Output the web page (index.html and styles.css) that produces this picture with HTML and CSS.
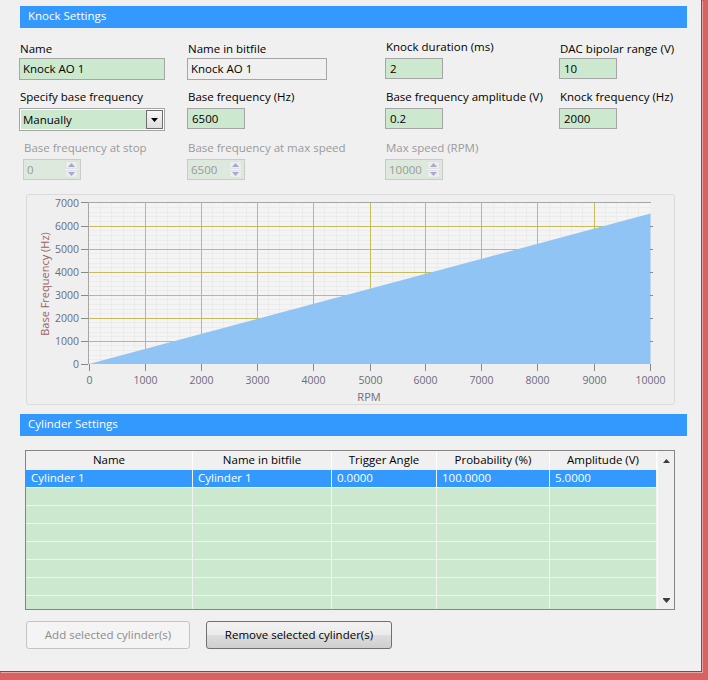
FILE: index.html
```html
<!DOCTYPE html>
<html>
<head>
<meta charset="utf-8">
<link rel="stylesheet" href="styles.css">
</head>
<body>
<div class="window">
  <div class="section-header">Knock Settings</div>

  <div class="form">
    <div class="field">
      <div class="label">Name</div>
      <div class="input w-name r1">Knock AO 1</div>
    </div>
    <div class="field">
      <div class="label">Name in bitfile</div>
      <div class="input w-bit r1 indicator">Knock AO 1</div>
    </div>
    <div class="field">
      <div class="label up">Knock duration (ms)</div>
      <div class="input w-sm r1u h21">2</div>
    </div>
    <div class="field">
      <div class="label">DAC bipolar range (V)</div>
      <div class="input w-sm r1 h21">10</div>
    </div>

    <div class="field">
      <div class="label">Specify base frequency</div>
      <div class="combo">
        <div class="combo-text">Manually</div>
        <div class="combo-btn"><svg width="7" height="4" viewBox="0 0 7 4"><path d="M0 0h7L3.5 4z" fill="#000"/></svg></div>
      </div>
    </div>
    <div class="field">
      <div class="label">Base frequency (Hz)</div>
      <div class="input w-sm r2 h21">6500</div>
    </div>
    <div class="field">
      <div class="label">Base frequency amplitude (V)</div>
      <div class="input w-sm r2 h21">0.2</div>
    </div>
    <div class="field">
      <div class="label">Knock frequency (Hz)</div>
      <div class="input w-sm r2 h21">2000</div>
    </div>

    <div class="field shift">
      <div class="label disabled">Base frequency at stop</div>
      <div class="spin">
        <div class="spin-val">0</div>
        <div class="spin-btns">
          <div class="spin-btn"><svg width="7" height="4" viewBox="0 0 7 4"><path d="M0 4h7L3.5 0z" fill="#a4a8d2"/></svg></div>
          <div class="spin-btn"><svg width="7" height="4" viewBox="0 0 7 4"><path d="M0 0h7L3.5 4z" fill="#a4a8d2"/></svg></div>
        </div>
      </div>
    </div>
    <div class="field">
      <div class="label disabled">Base frequency at max speed</div>
      <div class="spin">
        <div class="spin-val">6500</div>
        <div class="spin-btns">
          <div class="spin-btn"><svg width="7" height="4" viewBox="0 0 7 4"><path d="M0 4h7L3.5 0z" fill="#a4a8d2"/></svg></div>
          <div class="spin-btn"><svg width="7" height="4" viewBox="0 0 7 4"><path d="M0 0h7L3.5 4z" fill="#a4a8d2"/></svg></div>
        </div>
      </div>
    </div>
    <div class="field">
      <div class="label disabled">Max speed (RPM)</div>
      <div class="spin">
        <div class="spin-val">10000</div>
        <div class="spin-btns">
          <div class="spin-btn"><svg width="7" height="4" viewBox="0 0 7 4"><path d="M0 4h7L3.5 0z" fill="#a4a8d2"/></svg></div>
          <div class="spin-btn"><svg width="7" height="4" viewBox="0 0 7 4"><path d="M0 0h7L3.5 4z" fill="#a4a8d2"/></svg></div>
        </div>
      </div>
    </div>
  </div>

  <div class="chart">
    <svg class="chart-svg" width="647" height="209" viewBox="0 0 647 209">
      <rect x="62" y="7" width="561" height="162" fill="#f4f4f4"/>
      <g stroke="#ececec" stroke-width="1">
        <path d="M73.5 7V169M84.5 7V169M96.5 7V169M107.5 7V169M129.5 7V169M140.5 7V169M152.5 7V169M163.5 7V169M185.5 7V169M196.5 7V169M208.5 7V169M219.5 7V169M241.5 7V169M252.5 7V169M264.5 7V169M275.5 7V169M297.5 7V169M309.5 7V169M320.5 7V169M331.5 7V169M354.5 7V169M365.5 7V169M376.5 7V169M387.5 7V169M410.5 7V169M421.5 7V169M432.5 7V169M443.5 7V169M466.5 7V169M477.5 7V169M488.5 7V169M499.5 7V169M522.5 7V169M533.5 7V169M544.5 7V169M555.5 7V169M578.5 7V169M589.5 7V169M600.5 7V169M611.5 7V169"/>
        <path d="M62 12.5H623M62 17.5H623M62 21.5H623M62 26.5H623M62 35.5H623M62 40.5H623M62 45.5H623M62 49.5H623M62 58.5H623M62 63.5H623M62 68.5H623M62 72.5H623M62 81.5H623M62 86.5H623M62 91.5H623M62 95.5H623M62 104.5H623M62 109.5H623M62 114.5H623M62 118.5H623M62 127.5H623M62 132.5H623M62 137.5H623M62 141.5H623M62 150.5H623M62 155.5H623M62 160.5H623M62 164.5H623"/>
      </g>
      <g stroke="#c4bb5e" stroke-width="1">
        <path d="M118.5 7V169M174.5 7V169M230.5 7V169M286.5 7V169M343.5 7V169M398.5 7V169M454.5 7V169M510.5 7V169M567.5 7V169"/>
        <path d="M62 146.5H623M62 123.5H623M62 100.5H623M62 77.5H623M62 54.5H623M62 31.5H623"/>
      </g>
      <polygon points="62,169 623.5,169 623.5,18.6" fill="#90c4f5"/>
      <g stroke="#a6a6a6" stroke-width="1">
        <path d="M62 7.5H624"/>
        <path d="M61.5 7V169"/>
      </g>
      <g stroke="#8a8a8a" stroke-width="1">
        <path d="M54 7.5H61M54 31.5H61M54 54.5H61M54 77.5H61M54 100.5H61M54 123.5H61M54 146.5H61M54 169.5H61"/>
        <path d="M623 31.5H626M623 54.5H626M623 77.5H626M623 100.5H626M623 123.5H626M623 146.5H626"/>
        <path d="M62.5 169V176M118.5 169V176M174.5 169V176M230.5 169V176M286.5 169V176M343.5 169V176M398.5 169V176M454.5 169V176M510.5 169V176M567.5 169V176M623.5 169V176"/>
      </g>
      <g class="tick-text" text-anchor="end">
        <text x="52" y="11.5">7000</text>
        <text x="52" y="35">6000</text>
        <text x="52" y="58">5000</text>
        <text x="52" y="81">4000</text>
        <text x="52" y="104">3000</text>
        <text x="52" y="127">2000</text>
        <text x="52" y="150">1000</text>
        <text x="52" y="173">0</text>
      </g>
      <g class="tick-text" text-anchor="middle">
        <text x="62.5" y="189">0</text>
        <text x="118.5" y="189">1000</text>
        <text x="174.5" y="189">2000</text>
        <text x="230.5" y="189">3000</text>
        <text x="286.5" y="189">4000</text>
        <text x="343.5" y="189">5000</text>
        <text x="398.5" y="189">6000</text>
        <text x="454.5" y="189">7000</text>
        <text x="510.5" y="189">8000</text>
        <text x="567.5" y="189">9000</text>
        <text x="623.5" y="189">10000</text>
      </g>
      <text class="axis-x" x="342" y="206" text-anchor="middle">RPM</text>
      <text class="axis-y" transform="translate(22 89) rotate(-90)" text-anchor="middle">Base Frequency (Hz)</text>
    </svg>
  </div>

  <div class="section-header second">Cylinder Settings</div>

  <div class="table">
    <div class="tbl-main">
      <div class="tbl-row tbl-head">
        <div class="cell">Name</div>
        <div class="cell">Name in bitfile</div>
        <div class="cell">Trigger Angle</div>
        <div class="cell">Probability (%)</div>
        <div class="cell">Amplitude (V)</div>
      </div>
      <div class="tbl-row selected">
        <div class="cell">Cylinder 1</div>
        <div class="cell">Cylinder 1</div>
        <div class="cell">0.0000</div>
        <div class="cell">100.0000</div>
        <div class="cell">5.0000</div>
      </div>
      <div class="tbl-row"><div class="cell"></div><div class="cell"></div><div class="cell"></div><div class="cell"></div><div class="cell"></div></div>
      <div class="tbl-row"><div class="cell"></div><div class="cell"></div><div class="cell"></div><div class="cell"></div><div class="cell"></div></div>
      <div class="tbl-row"><div class="cell"></div><div class="cell"></div><div class="cell"></div><div class="cell"></div><div class="cell"></div></div>
      <div class="tbl-row"><div class="cell"></div><div class="cell"></div><div class="cell"></div><div class="cell"></div><div class="cell"></div></div>
      <div class="tbl-row"><div class="cell"></div><div class="cell"></div><div class="cell"></div><div class="cell"></div><div class="cell"></div></div>
      <div class="tbl-row"><div class="cell"></div><div class="cell"></div><div class="cell"></div><div class="cell"></div><div class="cell"></div></div>
      <div class="tbl-row"><div class="cell"></div><div class="cell"></div><div class="cell"></div><div class="cell"></div><div class="cell"></div></div>
    </div>
    <div class="tbl-scroll">
      <svg width="7" height="4" viewBox="0 0 7 4"><path d="M0 4h7L3.5 0z" fill="#3c3c3c"/></svg>
      <svg width="7" height="5" viewBox="0 0 7 5"><path d="M0 0h7v1H0zM0 1h7L3.5 5z" fill="#3c3c3c"/></svg>
    </div>
  </div>

  <div class="buttons">
    <button class="btn btn-disabled">Add selected cylinder(s)</button>
    <button class="btn btn-normal">Remove selected cylinder(s)</button>
  </div>
</div>
</body>
</html>
```

FILE: styles.css
```css
* {
  box-sizing: border-box;
}

html, body {
  margin: 0;
  padding: 0;
}

body {
  width: 708px;
  height: 680px;
  overflow: hidden;
  background: #d66262;
  font-family: "Open Sans", "DejaVu Sans", sans-serif;
  font-size: 11.5px;
  color: #000;
}

.window {
  width: 702px;
  height: 672px;
  background: #f0f0f0;
  border-right: 1px solid #5a5a5a;
  border-bottom: 1px solid #5a5a5a;
  box-shadow: 1px 1px 0 #eba5a5;
  padding: 6px 0 0 19px;
}

.section-header {
  margin-left: 1px;
  width: 667px;
  height: 22px;
  background: #3399ff;
  color: #fff;
  line-height: 20px;
  padding-left: 8px;
  white-space: nowrap;
}

.section-header.second {
  margin-top: 9px;
}

/* form */
.form {
  display: grid;
  grid-template-columns: 168px 198px 174px 1fr;
  grid-template-rows: 40px 43px 40px;
  row-gap: 8px;
  margin-top: 13px;
}

.field {
  display: flex;
  flex-direction: column;
  align-items: flex-start;
}

.field.shift {
  padding-left: 4px;
}

.label {
  height: 16px;
  line-height: 16px;
  padding-left: 1px;
  white-space: nowrap;
}

.label.up {
  margin-top: -2px;
}

.label.disabled {
  color: #9a9a9a;
}

.input {
  height: 22px;
  line-height: 20px;
  border: 1px solid #a5a5a5;
  background: #cce8cf;
  padding: 0 3px;
  white-space: nowrap;
}

.input.h21 {
  height: 21px;
  line-height: 19px;
  padding-left: 4px;
}

.input.r1 {
  margin-top: 1px;
}

.input.r1u {
  margin-top: 3px;
}

.input.r2 {
  margin-top: 3px;
}

.input.indicator {
  background: #f0f0f0;
}

.w-name {
  width: 146px;
}

.w-bit {
  width: 140px;
}

.w-sm {
  width: 58px;
}

.combo {
  margin-top: 3px;
  width: 146px;
  height: 23px;
  border: 1px solid #a5a5a5;
  background: #fff;
  padding: 1px;
  display: flex;
}

.combo-text {
  flex: 1;
  background: #cce8cf;
  padding-left: 2px;
  line-height: 19px;
}

.combo-btn {
  width: 17px;
  height: 19px;
  border: 1px solid #6e6e6e;
  background: linear-gradient(#f6f6f6, #dedede);
  display: flex;
  align-items: center;
  justify-content: center;
}

.spin {
  margin-top: 3px;
  width: 58px;
  height: 21px;
  border: 1px solid #cacaca;
  background: #dce9dc;
  display: flex;
  color: #9a9a9a;
}

.spin-val {
  flex: 1;
  padding-left: 3px;
  line-height: 19px;
}

.spin-btns {
  width: 13px;
  margin: 1px 2px 1px 0;
  display: flex;
  flex-direction: column;
  gap: 1px;
  background: #f4f4f4;
}

.spin-btn {
  flex: 1;
  border: 1px solid #e0e0e0;
  background: #ededed;
  display: flex;
  align-items: center;
  justify-content: center;
}

/* chart */
.chart {
  margin: 14px 0 0 7px;
  width: 649px;
  height: 211px;
  border: 1px solid #dadada;
  border-radius: 3px;
  background: #efefef;
}

.chart-svg {
  display: block;
}

.tick-text text {
  font-family: "Open Sans", "DejaVu Sans", sans-serif;
  font-size: 10.5px;
  fill: #6c6c7c;
}

.axis-x {
  font-family: "Open Sans", "DejaVu Sans", sans-serif;
  font-size: 11px;
  fill: #6c6c7c;
}

.axis-y {
  font-family: "Open Sans", "DejaVu Sans", sans-serif;
  font-size: 11px;
  fill: #9a6262;
}

/* table */
.table {
  margin: 14px 0 0 6px;
  width: 650px;
  height: 160px;
  border: 1px solid #848484;
  background: #f0f0f0;
  display: flex;
}

.tbl-main {
  width: 631px;
  overflow: hidden;
}

.tbl-row {
  display: grid;
  grid-template-columns: 167px 139px 105px 113px 107px;
  height: 18px;
  border-bottom: 1px solid #f2f2f2;
}

.tbl-row .cell {
  background: #cce8cf;
  border-right: 1px solid #f2f2f2;
  padding-left: 5px;
  line-height: 16px;
  white-space: nowrap;
  overflow: hidden;
}

.tbl-row.tbl-head {
  height: 19px;
  border-bottom: none;
}

.tbl-row.tbl-head .cell {
  background: #f0f0f0;
  border-right: 1px solid #fff;
  text-align: center;
  padding-left: 0;
  line-height: 18px;
}

.tbl-row.selected .cell {
  background: #3399ff;
  color: #fff;
}

.tbl-scroll {
  width: 17px;
  background: #f0f0f0;
  border-left: 1px solid #f8f8f8;
  display: flex;
  flex-direction: column;
  align-items: center;
  justify-content: space-between;
  padding: 8px 0 6px;
}

/* buttons */
.buttons {
  margin: 11px 0 0 7px;
  display: flex;
  gap: 16px;
}

.btn {
  height: 28px;
  border-radius: 3px;
  padding: 0;
  font-family: inherit;
  font-size: 11.5px;
  line-height: 26px;
  text-align: center;
}

.btn-disabled {
  width: 164px;
  border: 1px solid #c4c4c4;
  background: #f4f4f4;
  color: #8c8c8c;
}

.btn-normal {
  width: 186px;
  border: 1px solid #707070;
  background: linear-gradient(#f2f2f2 0%, #ebebeb 50%, #dddddd 50%, #cfcfcf 100%);
  color: #000;
}
```
